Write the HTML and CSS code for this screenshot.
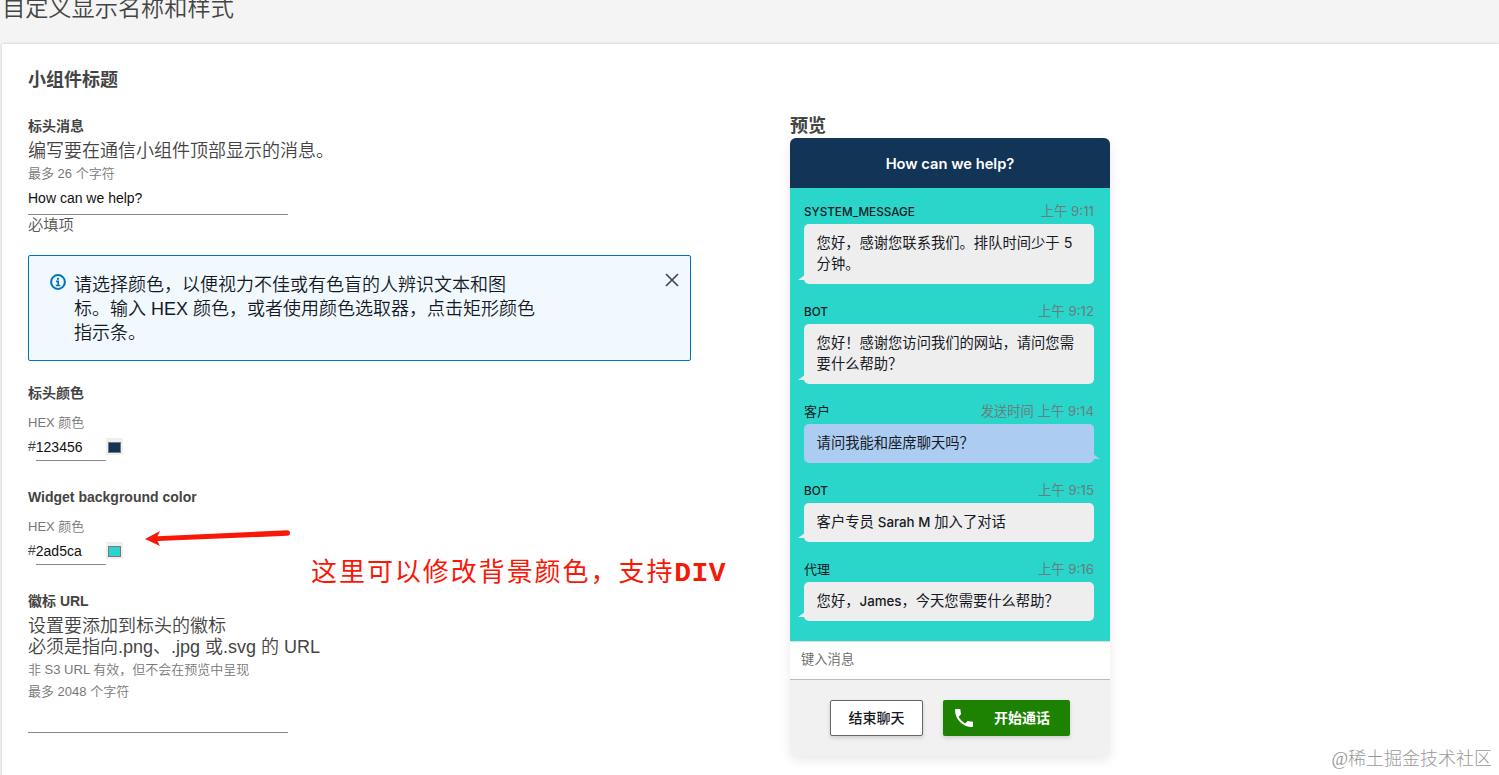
FILE: index.html
```
<!DOCTYPE html>
<html lang="zh-CN">
<head>
  <meta charset="UTF-8">
  <title>自定义显示名称和样式</title>
  <link rel="stylesheet" href="styles.css">
</head>
<body>
<h1 class="page-title">自定义显示名称和样式</h1>

<main class="card">
  <section class="settings">
    <h2 class="card-title">小组件标题</h2>

    <div class="field">
      <h3>标头消息</h3>
      <p class="desc">编写要在通信小组件顶部显示的消息。</p>
      <p class="note">最多 26 个字符</p>
      <input class="text-input" type="text" value="How can we help?">
      <p class="hint">必填项</p>
    </div>

    <div class="alert">
      <svg class="info" width="16" height="16" viewBox="0 0 16 16" fill="none" stroke="#0073bb">
        <circle cx="8" cy="8" r="6.9" stroke-width="2"/>
        <path d="M6 7.4h2.2v4M5.8 11.5h4.6" stroke-width="1.7"/>
        <path d="M7 4.7h2" stroke-width="2"/>
      </svg>
      <p>请选择颜色，以便视力不佳或有色盲的人辨识文本和图<br>标。输入 HEX 颜色，或者使用颜色选取器，点击矩形颜色<br>指示条。</p>
      <svg class="close" width="14" height="14" viewBox="0 0 14 14" stroke="#414750" stroke-width="1.7">
        <path d="M1 1l12 12M13 1L1 13"/>
      </svg>
    </div>

    <div class="field color">
      <h3>标头颜色</h3>
      <p class="note">HEX 颜色</p>
      <div class="hex"><span>#</span><input type="text" value="123456"><i class="swatch navy"></i></div>
    </div>

    <div class="field color">
      <h3>Widget background color</h3>
      <p class="note">HEX 颜色</p>
      <div class="hex"><span>#</span><input type="text" value="2ad5ca"><i class="swatch teal"></i></div>
    </div>

    <div class="field logo">
      <h3>徽标 URL</h3>
      <p class="desc">设置要添加到标头的徽标<br>必须是指向.png、.jpg 或.svg 的 URL</p>
      <p class="note">非 S3 URL 有效，但不会在预览中呈现<br>最多 2048 个字符</p>
      <input class="text-input" type="text">
    </div>
  </section>

  <section class="preview">
    <h2>预览</h2>
    <div class="widget">
      <div class="widget-header">How can we help?</div>
      <div class="chat">
        <div class="msg">
          <div class="meta"><b>SYSTEM_MESSAGE</b><span>上午 9:11</span></div>
          <div class="bubble">您好，感谢您联系我们。排队时间少于 5<br>分钟。</div>
        </div>
        <div class="msg">
          <div class="meta"><b>BOT</b><span>上午 9:12</span></div>
          <div class="bubble">您好！感谢您访问我们的网站，请问您需<br>要什么帮助？</div>
        </div>
        <div class="msg mine">
          <div class="meta"><b class="cjk">客户</b><span>发送时间 上午 9:14</span></div>
          <div class="bubble">请问我能和座席聊天吗？</div>
        </div>
        <div class="msg">
          <div class="meta"><b>BOT</b><span>上午 9:15</span></div>
          <div class="bubble">客户专员 <em>Sarah M</em> 加入了对话</div>
        </div>
        <div class="msg">
          <div class="meta"><b class="cjk">代理</b><span>上午 9:16</span></div>
          <div class="bubble">您好，<em>James</em>，今天您需要什么帮助？</div>
        </div>
      </div>
      <div class="compose">键入消息</div>
      <div class="actions">
        <button class="btn-end">结束聊天</button>
        <button class="btn-call">
          <svg width="24" height="24" viewBox="0 0 24 24" fill="#fff"><path d="M6.62 10.79c1.44 2.83 3.76 5.14 6.59 6.59l2.2-2.2c.27-.27.67-.36 1.02-.24 1.12.37 2.33.57 3.57.57.55 0 1 .45 1 1V20c0 .55-.45 1-1 1-9.39 0-17-7.61-17-17 0-.55.45-1 1-1h3.5c.55 0 1 .45 1 1 0 1.25.2 2.45.57 3.57.11.35.03.74-.25 1.02l-2.2 2.2z"/></svg>
          <span>开始通话</span>
        </button>
      </div>
    </div>
  </section>
</main>

<!-- annotation -->
<svg class="arrow" width="150" height="24" viewBox="0 0 150 24" fill="#f81808">
  <path d="M2 14L17 6L14.5 11.3L144 5.2Q147 5.4 147 8Q147 10.6 144 10.8L14.5 16L17 21Z"/>
</svg>
<p class="remark">这里可以修改背景颜色，支持<span>DIV</span></p>
<p class="watermark">@稀土掘金技术社区</p>
</body>
</html>
```
FILE: styles.css
```
* {
  box-sizing: border-box;
}

body {
  margin: 0;
  height: 775px;
  overflow: hidden;
  background: #f4f4f4;
  color: #444;
  font-family: "Liberation Sans", "Noto Sans CJK SC", sans-serif;
}

h1, h2, h3, p {
  margin: 0;
}

.page-title {
  height: 44px;
  padding-left: 2px;
  font-size: 23.2px;
  font-weight: 350;
  line-height: 16px;
  white-space: nowrap;
}

.card {
  display: flex;
  margin-left: 2px;
  height: 740px;
  padding: 24px 26px;
  background: #fff;
  box-shadow: 0 0 3px rgba(0,0,0,.2);
}

.settings {
  width: 762px;
}

.card-title {
  font-size: 18px;
  line-height: 24px;
  margin-bottom: 24px;
}

.field h3 {
  font-size: 14px;
  line-height: 20px;
}

.desc {
  margin-top: 3px;
  font-size: 18px;
  font-weight: 350;
  line-height: 24px;
}

.note {
  margin-top: 1px;
  font-size: 13px;
  font-weight: 350;
  line-height: 20px;
  color: #777;
}

input {
  display: block;
  padding: 0 0 2px;
  border: 0;
  border-bottom: 1px solid #888;
  background: none;
  font: 14px "Liberation Sans", sans-serif;
  color: #111;
}

.text-input {
  width: 260px;
  height: 31px;
}

.hint {
  margin-top: 1px;
  font-size: 15.3px;
  font-weight: 350;
  line-height: 18px;
  color: #555;
}

/* info box */
.alert {
  display: flex;
  width: 663px;
  height: 106px;
  margin: 21px 0 22px;
  padding: 16px 11px 0 21px;
  border: 1px solid #0073bb;
  border-radius: 2px;
  background: #f1f9ff;
  color: #16191f;
}

.alert p {
  flex: 1;
  margin: 1px 0 0 8px;
  font-size: 18px;
  font-weight: 350;
  line-height: 24px;
}

.alert .info {
  margin-top: 2px;
}

.alert .close {
  margin-top: 1px;
}

.color {
  height: 104px;
}

.color .note {
  margin-top: 10px;
}

.hex {
  display: flex;
  margin-top: 3px;
  line-height: 21px;
  font-size: 14px;
}

.hex input {
  width: 70px;
  height: 25px;
}

.swatch {
  width: 17px;
  height: 17px;
  margin-top: 2px;
  padding: 4px 2px;
  background: #efefef;
}

.swatch::before {
  content: '';
  display: block;
  height: 9px;
  border: 1px solid #777;
}

.navy::before {
  background: #123456;
}

.teal::before {
  background: #2ad5ca;
}

.logo .desc {
  margin-top: 5px;
  line-height: 21px;
}

.logo .note {
  margin-top: 1px;
  line-height: 22px;
}

.logo .text-input {
  height: 30px;
}

/* preview */
.preview {
  padding-top: 46px;
}

.preview h2 {
  font-size: 18px;
  line-height: 24px;
}

.widget {
  width: 320px;
  height: 618px;
  border-radius: 6px;
  overflow: hidden;
  background: #f1f1f1;
  box-shadow: 0 4px 12px rgba(0,0,0,.09);
  font-family: Inter, "Noto Sans CJK SC", sans-serif;
}

.widget-header {
  height: 50px;
  background: #123456;
  color: #fff;
  font-size: 14.7px;
  font-weight: 600;
  line-height: 52px;
  text-align: center;
}

.chat {
  height: 453px;
  padding: 11px 16px 0 14px;
  background: #2ad5ca;
}

.msg {
  margin-bottom: 15px;
}

.meta {
  display: flex;
  justify-content: space-between;
  height: 25px;
  font-size: 13.3px;
  line-height: 25px;
  color: #6b7d80;
}

.meta b {
  font-size: 11.7px;
  font-weight: 500;
  line-height: 26px;
  color: #16191f;
}

.meta .cjk {
  font-size: 13px;
  font-weight: 400;
  line-height: 25px;
}

.bubble {
  position: relative;
  padding: 8px 0 10px 12.6px;
  border-radius: 5px;
  background: #eee;
  color: #16191f;
  font-size: 14.3px;
  line-height: 21px;
  white-space: nowrap;
}

.bubble em {
  font-size: 13.3px;
  font-style: normal;
  font-weight: 500;
  line-height: 1;
}

.bubble::after {
  content: '';
  position: absolute;
  left: -6px;
  bottom: 4px;
  border: solid transparent;
  border-width: 0 0 5px 7px;
  border-bottom-color: #eee;
}

.mine .bubble {
  background: #accdf1;
}

.mine .bubble::after {
  left: auto;
  right: -6px;
  border-width: 0 7px 5px 0;
  border-bottom-color: #accdf1;
}

.compose {
  height: 39px;
  padding-left: 11px;
  border-top: 1px solid #ddd;
  border-bottom: 1px solid #bbb;
  background: #fff;
  color: #666;
  font-size: 13.3px;
  font-weight: 350;
  line-height: 34px;
}

.actions {
  display: flex;
  justify-content: center;
  gap: 20px;
  padding-top: 20px;
}

button {
  height: 36px;
  padding: 0 0 2px;
  border-radius: 2px;
  font: bold 14px "Noto Sans CJK SC", sans-serif;
  box-shadow: 0 2px 4px rgba(0,0,0,.15);
}

.btn-end {
  width: 93px;
  border: 1px solid #666;
  background: #fff;
  color: #16191f;
  font-weight: 500;
}

.btn-call {
  display: flex;
  align-items: center;
  gap: 18px;
  width: 127px;
  padding: 0 0 0 9px;
  border: 0;
  background: #1d8102;
  color: #fff;
}

.btn-call span {
  margin-top: -2px;
}

/* annotation on top of the page */
.arrow {
  position: absolute;
  left: 143px;
  top: 525px;
}

.remark {
  position: absolute;
  left: 311px;
  top: 552px;
  font-size: 26px;
  font-weight: 400;
  letter-spacing: 1.95px;
  line-height: 40px;
  color: #f81808;
  white-space: nowrap;
}

.remark span {
  font-family: "Liberation Mono", monospace;
  font-size: 28px;
  font-weight: bold;
  letter-spacing: .4px;
}

.watermark {
  position: absolute;
  right: 7px;
  bottom: 4px;
  font-family: "Liberation Serif", "Noto Sans CJK SC", serif;
  font-size: 18px;
  font-weight: 300;
  line-height: 24px;
  color: #999;
}
```
